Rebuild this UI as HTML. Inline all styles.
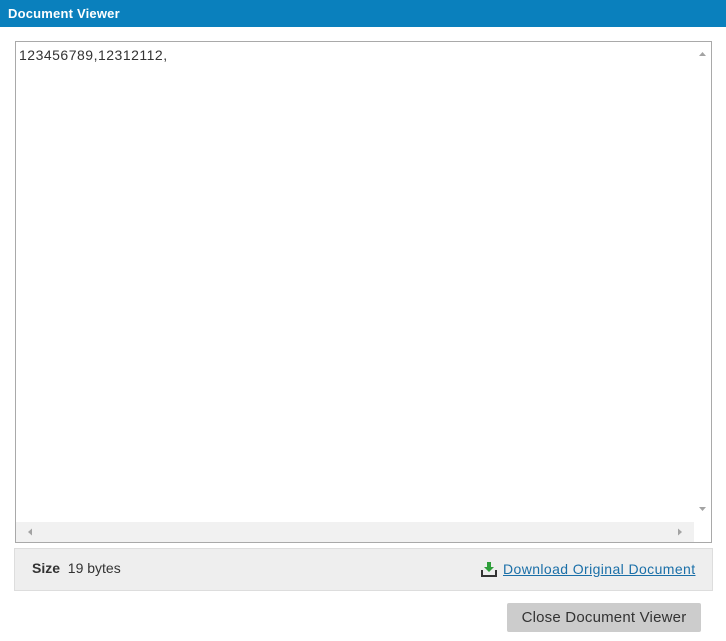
<!DOCTYPE html>
<html><head><style>
body{margin:0;width:726px;height:641px;background:#fff;font-family:"Liberation Sans",sans-serif;position:relative;overflow:hidden}
.hd{position:absolute;left:0;top:0;width:726px;height:27px;background:#0a80bd;color:#fff;font-weight:bold;font-size:13px;line-height:27px;padding-left:8px;box-sizing:border-box;letter-spacing:0.2px}
.ta{position:absolute;left:15px;top:41px;width:697px;height:502px;border:1px solid #a9a9a9;box-sizing:border-box}
.txt{position:absolute;left:3px;top:5px;font-size:14px;color:#333;letter-spacing:0.5px}
.vs{position:absolute;right:0;top:0;width:17px;height:479px;background:#fff}
.hs{position:absolute;left:0;bottom:0;width:678px;height:20px;background:#f1f1f1}
.info{position:absolute;left:14px;top:548px;width:699px;height:43px;background:#eee;border:1px solid #ddd;box-sizing:border-box}
.sz{position:absolute;left:17px;top:11px;font-size:14px;color:#333}
.dl{position:absolute;left:488px;top:12px;font-size:14px;color:#1a6fa8;text-decoration:underline;letter-spacing:0.4px}
.btn{position:absolute;left:507px;top:603px;width:194px;height:29px;background:#ccc;border-radius:2px;font-size:15px;color:#333;text-align:center;line-height:29px;letter-spacing:0.2px}
</style></head><body>
<div class="hd">Document Viewer</div>
<div class="ta"><div class="txt">123456789,12312112,</div>
<div class="vs"><svg width="17" height="479" style="position:absolute;left:0;top:0"><path d="M5 14l3.5-4 3.5 4z" fill="#a3a3a3"/><path d="M5 465l3.5 4 3.5-4z" fill="#a3a3a3"/></svg></div>
<div class="hs"><svg width="678" height="20"><path d="M12 10l4-3.5v7z" fill="#a3a3a3"/><path d="M666 10l-4-3.5v7z" fill="#a3a3a3"/></svg></div>
</div>
<div class="info"><div class="sz"><b>Size</b>&nbsp; 19 bytes</div>
<svg style="position:absolute;left:466px;top:12px" width="16" height="16"><path d="M1 9v6h14V9" stroke="#333" stroke-width="2" fill="none"/><path d="M6 1h4v5h3l-5 5-5-5h3z" fill="#2e9e3a"/></svg>
<div class="dl">Download Original Document</div></div>
<div class="btn">Close Document Viewer</div>
</body></html>
